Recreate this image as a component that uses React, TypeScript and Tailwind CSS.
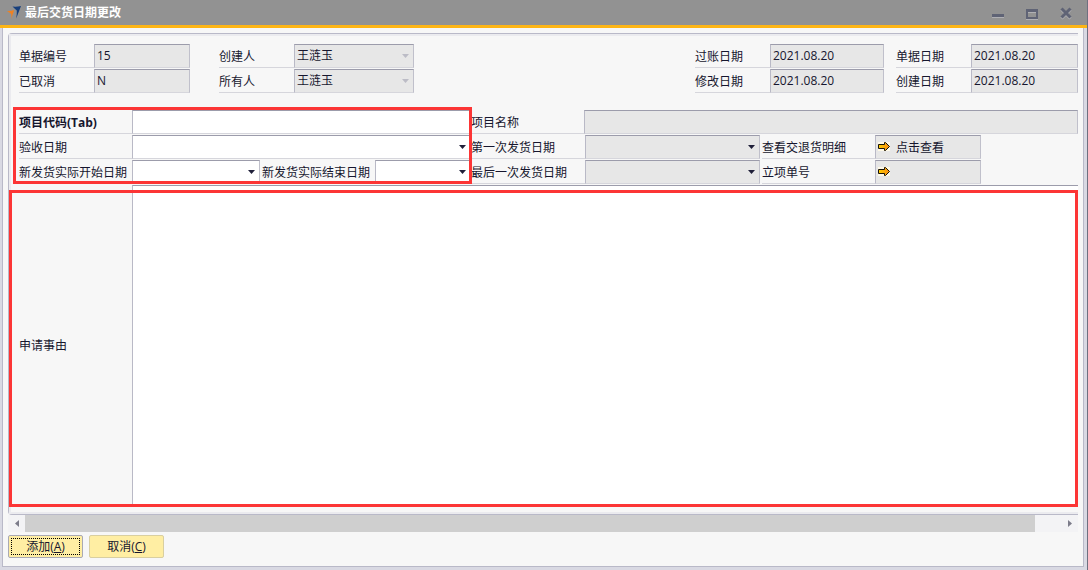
import type { ReactNode } from 'react';
import clsx from 'clsx';

const LABEL = 'flex h-6 shrink-0 items-center border-b border-[#d6d6dc] pt-0.5 whitespace-nowrap';
const FIELD =
  'block h-6 w-full appearance-none rounded-none border border-t-[#9c9cab] border-r-[#c0c0cb] border-b-[#d6d6dc] border-l-[#b9b9c6] pb-px outline-none disabled:opacity-100';

interface FieldProps {
  id: string;
  label: string;
  value?: string;
  labelWidth?: string;
  width?: string;
  tone?: string;
  bold?: boolean;
}

function FieldLabel({ id, label, labelWidth = 'w-[75px]', bold = false }: FieldProps) {
  return (
    <label htmlFor={id} className={clsx(LABEL, labelWidth, bold && 'font-bold')}>
      {label}
    </label>
  );
}

function TextField(props: FieldProps) {
  const { id, value = '', width = 'flex-1', tone = 'bg-[#e7e7e7]' } = props;
  return (
    <div className={clsx('flex', width === 'flex-1' && 'min-w-0 flex-1')}>
      <FieldLabel {...props} />
      <div className={clsx('min-w-0', width)}>
        <input id={id} type="text" defaultValue={value} className={clsx(FIELD, tone, 'pl-0.5')} />
      </div>
    </div>
  );
}

interface SelectFieldProps extends FieldProps {
  disabled?: boolean;
}

function SelectField(props: SelectFieldProps) {
  const { id, value = '', width = 'flex-1', tone = 'bg-[#e7e7e7]', disabled = false } = props;
  return (
    <div className={clsx('flex', width === 'flex-1' && 'min-w-0 flex-1')}>
      <FieldLabel {...props} />
      <div className={clsx('relative min-w-0', width)}>
        <select id={id} disabled={disabled} className={clsx(FIELD, tone, 'pl-0.5')}>
          <option>{value}</option>
        </select>
        <svg
          viewBox="0 0 7 4"
          className={clsx(
            'pointer-events-none absolute top-[10px] right-[5px] h-1 w-[7px]',
            disabled ? 'fill-[#bcbcc6]' : 'fill-[#20203a]',
          )}
        >
          <path d="M0 0h7L3.5 4z" />
        </svg>
      </div>
    </div>
  );
}

// Field with the orange drill-down arrow in front of its value
function LinkField(props: FieldProps) {
  const { id, value = '', label } = props;
  return (
    <div className="flex">
      <FieldLabel {...props} />
      <div className="relative w-[106px]">
        <input id={id} type="text" readOnly value={value} className={clsx(FIELD, 'bg-[#e7e7e7] pl-5')} />
        <button type="button" aria-label={label} className="absolute top-[7px] left-[3px] h-[9px] w-3 bg-[#fff9e6]">
          <svg viewBox="0 0 12 9" className="block h-[9px] w-3">
            <defs>
              <linearGradient id={`${id}-arrow`} x1="0" y1="0" x2="1" y2="0">
                <stop offset="0" stopColor="#ffcf00" />
                <stop offset="1" stopColor="#f98a10" />
              </linearGradient>
            </defs>
            <path
              d="M.5 2.5H6.5V.5H7.500L11.500 4.500 7.500 8.500H6.500V6.500H.5z"
              fill={`url(#${id}-arrow)`}
              stroke="#17130a"
              strokeWidth="1"
            />
          </svg>
        </button>
      </div>
    </div>
  );
}

function WindowButton({ label, children }: { label: string; children: ReactNode }) {
  return (
    <button type="button" aria-label={label} className="h-3 w-3">
      <svg viewBox="0 0 12 12" className="block h-3 w-3 overflow-visible" fill="none">
        {children}
      </svg>
    </button>
  );
}

function TitleBar() {
  return (
    <header className="flex h-7 items-center border-b-3 border-[#fdb515] bg-[#929292] pr-[15px] pl-[7px]">
      <svg viewBox="0 0 14 14" className="h-[14px] w-[14px]">
        <path d="M5.500.5Q9.500 1 14 0L9.200 12.600Q10 7.500 9.800 4.500Q7.500 2.500 5.500.5z" fill="#173f7c" />
        <path d="M0 5Q3.500 5.400 7.200 4L4 13.600Q4.600 10.500 4.200 8Q2 6.600 0 5z" fill="#ef8122" />
      </svg>
      <h1 className="ml-1 text-xs font-bold text-white">最后交货日期更改</h1>
      <div className="ml-auto flex gap-[22px]">
        <WindowButton label="最小化">
          <path d="M0 10.500h12" stroke="#b0b0b4" />
          <path d="M0 8.500h12" stroke="#5f6375" strokeWidth="3" />
        </WindowButton>
        <WindowButton label="最大化">
          <path d="M0 12.500h12M2 5.500h8" stroke="#b0b0b4" />
          <path d="M1 3v8h10V3z" stroke="#5f6375" strokeWidth="2" />
          <path d="M0 3.500h12" stroke="#5f6375" strokeWidth="3" />
        </WindowButton>
        <WindowButton label="关闭">
          <path d="M1.500 2.500l9 9m0-9l-9 9" stroke="#b0b0b4" strokeWidth="3" />
          <path d="M1.500 1.500l9 9m0-9l-9 9" stroke="#5f6375" strokeWidth="3" />
        </WindowButton>
      </div>
    </header>
  );
}

function HeaderFields() {
  return (
    <div className="flex">
      <div className="flex flex-col gap-px">
        <TextField id="doc-no" label="单据编号" value="15" width="w-24" />
        <TextField id="cancelled" label="已取消" value="N" width="w-24" />
      </div>
      <div className="ml-[29px] flex flex-col gap-px">
        <SelectField id="creator" label="创建人" value="王涟玉" width="w-[120px]" disabled />
        <SelectField id="owner" label="所有人" value="王涟玉" width="w-[120px]" disabled />
      </div>
      <div className="ml-auto flex flex-col gap-px">
        <TextField id="posting-date" label="过账日期" value="2021.08.20" width="w-[114px]" />
        <TextField id="modified-date" label="修改日期" value="2021.08.20" width="w-[114px]" />
      </div>
      <div className="ml-3 flex flex-col gap-px">
        <TextField id="doc-date" label="单据日期" value="2021.08.20" width="w-[107px]" />
        <TextField id="created-date" label="创建日期" value="2021.08.20" width="w-[107px]" />
      </div>
    </div>
  );
}

function ProjectFields() {
  return (
    <div className="mt-[17px] flex">
      <div className="relative flex w-[452px] shrink-0 flex-col gap-px">
        <TextField id="project-code" label="项目代码(Tab)" labelWidth="w-[113px]" tone="bg-white" bold />
        <SelectField id="accept-date" label="验收日期" labelWidth="w-[113px]" tone="bg-white" />
        <div className="flex gap-0.5">
          <SelectField
            id="new-start"
            label="新发货实际开始日期"
            labelWidth="w-[113px]"
            width="w-32"
            tone="bg-white"
          />
          <SelectField id="new-end" label="新发货实际结束日期" labelWidth="w-[113px]" tone="bg-white" />
        </div>
        <div className="pointer-events-none absolute -top-[3px] -right-px bottom-0 -left-1.5 border-3 border-[#fc3535]" />
      </div>
      <div className="flex min-w-0 flex-1 flex-col gap-px">
        <TextField id="project-name" label="项目名称" labelWidth="w-[113px]" />
        <div className="flex gap-0.5">
          <SelectField id="first-ship" label="第一次发货日期" labelWidth="w-[114px]" width="w-[175px]" />
          <LinkField id="return-detail" label="查看交退货明细" labelWidth="w-[113px]" value="点击查看" />
        </div>
        <div className="flex gap-0.5">
          <SelectField id="last-ship" label="最后一次发货日期" labelWidth="w-[114px]" width="w-[175px]" />
          <LinkField id="approval-no" label="立项单号" labelWidth="w-[113px]" />
        </div>
      </div>
    </div>
  );
}

function HorizontalScrollbar() {
  return (
    <div className="flex h-[17px] bg-[#f3f3f5]">
      <button type="button" aria-label="向左滚动" className="flex w-[17px] items-center justify-center">
        <svg viewBox="0 0 4 7" className="h-[7px] w-1 fill-[#7c7c8a]">
          <path d="M4 0v7L0 3.500z" />
        </svg>
      </button>
      <div className="flex flex-1">
        <div className="w-[97.500%] bg-[#cfcfcf]" />
      </div>
      <button type="button" aria-label="向右滚动" className="flex w-[17px] items-center justify-center">
        <svg viewBox="0 0 4 7" className="h-[7px] w-1 fill-[#7c7c8a]">
          <path d="M0 0v7l4-3.500z" />
        </svg>
      </button>
    </div>
  );
}

function ActionButton({ text, hotkey, focused = false }: { text: string; hotkey: string; focused?: boolean }) {
  return (
    <button
      type="button"
      className={clsx(
        'h-[23px] w-[75px] rounded-xs border bg-[#ffeea3] p-0.5',
        focused ? 'border-[#a9a9b4]' : 'border-[#d9cfa0]',
      )}
    >
      <span
        className={clsx(
          'flex h-full items-center justify-center border border-dotted',
          focused ? 'border-black' : 'border-transparent',
        )}
      >
        {text}(<u>{hotkey}</u>)
      </span>
    </button>
  );
}

export default function App() {
  return (
    <div className="flex min-h-screen flex-col border-r border-[#6e7080] bg-[#d9d9e3] font-['Open_Sans','Noto_Sans_CJK_SC',sans-serif] text-xs leading-4 text-[#16162e]">
      <TitleBar />
      <main className="mr-[3px] mb-[3px] ml-0.5 flex flex-1 flex-col border-x border-b border-[#b9b9c8] bg-[#f7f7f7] px-[5px] pt-[5px] pb-2">
        <section className="flex flex-1 flex-col rounded-l-sm border-y border-l border-[#b9b9c8]">
          <div className="flex flex-1 flex-col border-y-2 border-l-2 border-[#ebebef] pt-2 pb-[7px] pl-2">
            <HeaderFields />
            <ProjectFields />
            <div className="relative mt-px flex flex-1">
              <label htmlFor="reason" className="flex w-[113px] shrink-0 items-center pt-0.5">
                申请事由
              </label>
              <textarea
                id="reason"
                className="min-w-0 flex-1 resize-none border-t border-l border-t-[#9c9cab] border-l-[#b9b9c6] bg-white p-1 outline-none"
              />
              <div className="pointer-events-none absolute top-[5px] right-0 -bottom-0.5 -left-2.5 border-3 border-[#fc3535]" />
            </div>
          </div>
        </section>
        <HorizontalScrollbar />
        <div className="mt-[3px] flex gap-1.5">
          <ActionButton text="添加" hotkey="A" focused />
          <ActionButton text="取消" hotkey="C" />
        </div>
      </main>
    </div>
  );
}
